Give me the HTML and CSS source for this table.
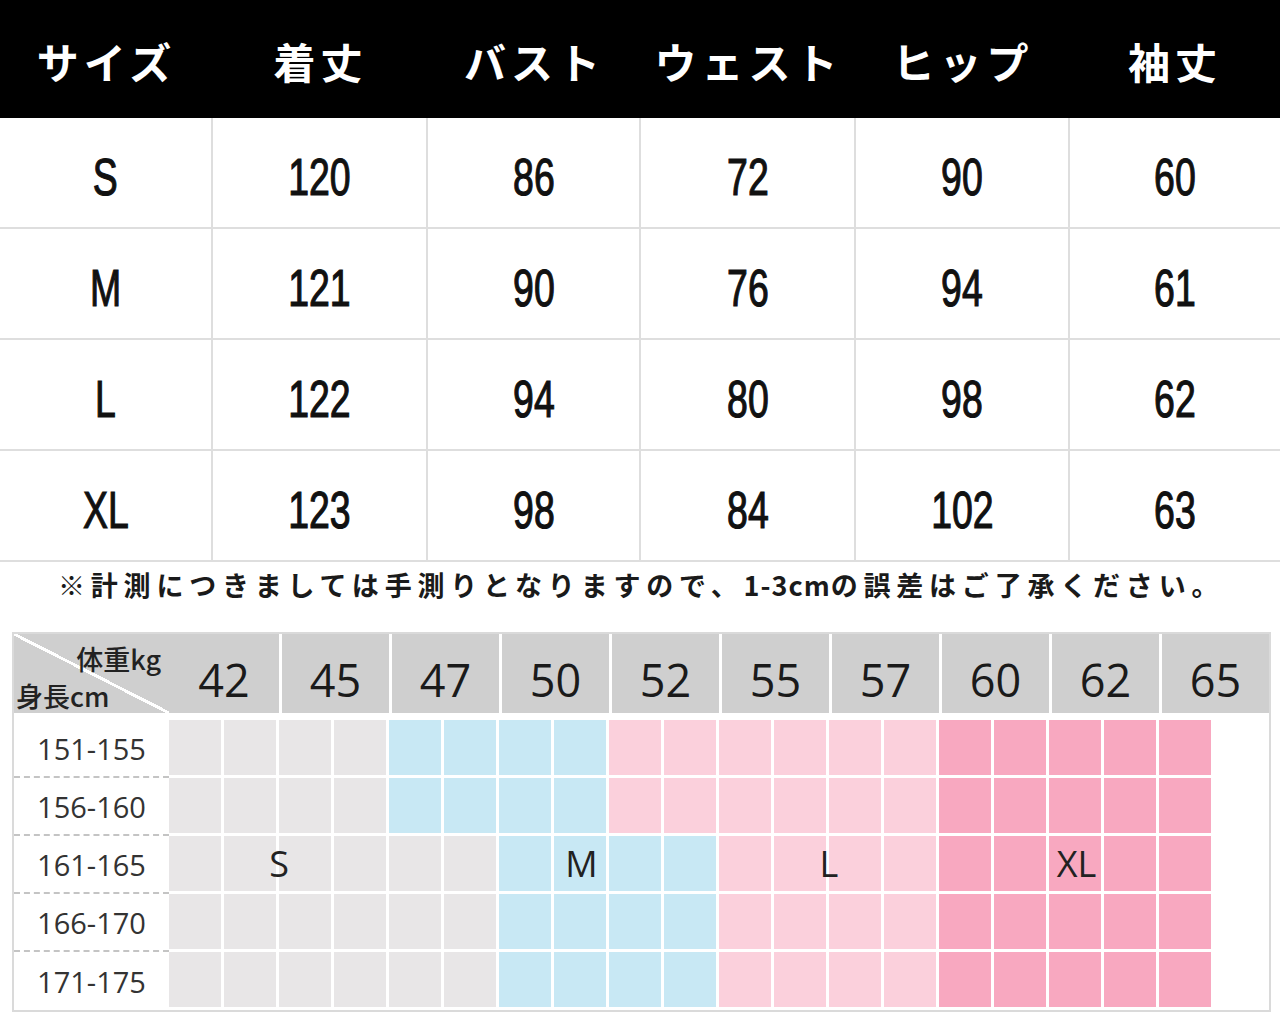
FILE: index.html
```html
<!DOCTYPE html>
<html lang="ja">
  <head>
    <meta charset="UTF-8" />
    <meta name="viewport" content="width=device-width, initial-scale=1.0" />
    <title>サイズ表</title>
    <link rel="stylesheet" href="styles.css">
  </head>
  <body>
    <div class="size-table">
      <div class="head">サイズ</div>
      <div class="head">着丈</div>
      <div class="head">バスト</div>
      <div class="head">ウェスト</div>
      <div class="head">ヒップ</div>
      <div class="head">袖丈</div>

      <div class="cell"><span>S</span></div>
      <div class="cell"><span>120</span></div>
      <div class="cell"><span>86</span></div>
      <div class="cell"><span>72</span></div>
      <div class="cell"><span>90</span></div>
      <div class="cell"><span>60</span></div>

      <div class="cell"><span>M</span></div>
      <div class="cell"><span>121</span></div>
      <div class="cell"><span>90</span></div>
      <div class="cell"><span>76</span></div>
      <div class="cell"><span>94</span></div>
      <div class="cell"><span>61</span></div>

      <div class="cell"><span>L</span></div>
      <div class="cell"><span>122</span></div>
      <div class="cell"><span>94</span></div>
      <div class="cell"><span>80</span></div>
      <div class="cell"><span>98</span></div>
      <div class="cell"><span>62</span></div>

      <div class="cell"><span>XL</span></div>
      <div class="cell"><span>123</span></div>
      <div class="cell"><span>98</span></div>
      <div class="cell"><span>84</span></div>
      <div class="cell"><span>102</span></div>
      <div class="cell"><span>63</span></div>
    </div>

    <p class="note">※計測につきましては手測りとなりますので、<span class="narrow">1-3cm</span>の誤差はご了承ください。</p>

    <div class="chart">
      <div class="chart-head">
        <div class="corner">
          <span class="kg">体重kg</span>
          <span class="cm">身長cm</span>
        </div>
        <div class="w">42</div>
        <div class="w">45</div>
        <div class="w">47</div>
        <div class="w">50</div>
        <div class="w">52</div>
        <div class="w">55</div>
        <div class="w">57</div>
        <div class="w">60</div>
        <div class="w">62</div>
        <div class="w">65</div>
      </div>

      <div class="chart-body">
        <div class="row">
          <div class="range">151-155</div>
          <div class="block gray span-4"></div>
          <div class="block blue span-4"></div>
          <div class="block pink span-6"></div>
          <div class="block rose span-5"></div>
        </div>
        <div class="row">
          <div class="range">156-160</div>
          <div class="block gray span-4"></div>
          <div class="block blue span-4"></div>
          <div class="block pink span-6"></div>
          <div class="block rose span-5"></div>
        </div>
        <div class="row">
          <div class="range">161-165</div>
          <div class="block gray span-6"><span class="tag tag-s">S</span></div>
          <div class="block blue span-4"><span class="tag tag-m">M</span></div>
          <div class="block pink span-4"><span class="tag tag-l">L</span></div>
          <div class="block rose span-5"><span class="tag tag-xl">XL</span></div>
        </div>
        <div class="row">
          <div class="range">166-170</div>
          <div class="block gray span-6"></div>
          <div class="block blue span-4"></div>
          <div class="block pink span-4"></div>
          <div class="block rose span-5"></div>
        </div>
        <div class="row">
          <div class="range">171-175</div>
          <div class="block gray span-6"></div>
          <div class="block blue span-4"></div>
          <div class="block pink span-4"></div>
          <div class="block rose span-5"></div>
        </div>
      </div>
    </div>
  </body>
</html>
```

FILE: styles.css
```css
body {
  margin: 0;
  background: #fff;
  color: #111;
  font-family: "Noto Sans CJK JP", sans-serif;
}

/* top measurement table */
.size-table {
  display: grid;
  grid-template-columns: 213px 215px 213px 215px 214px 1fr;
}

.size-table .head {
  height: 118px;
  box-sizing: border-box;
  padding-top: 2px;
  background: #000;
  color: #fff;
  font-size: 42px;
  font-weight: bold;
  letter-spacing: 5px;
  display: flex;
  align-items: center;
  justify-content: center;
}

.size-table .cell {
  height: 111px;
  box-sizing: border-box;
  padding-top: 8px;
  border-right: 2px solid #dedede;
  border-bottom: 2px solid #dedede;
  font-family: "Liberation Sans", sans-serif;
  font-size: 52px;
  color: #111;
  -webkit-text-stroke: 1.2px #111;
  display: flex;
  align-items: center;
  justify-content: center;
}

.size-table .cell:nth-child(6n) {
  border-right: none;
}

.size-table .cell span {
  display: inline-block;
  transform: scaleX(0.72);
}

.note {
  margin: 0;
  height: 70px;
  box-sizing: border-box;
  padding: 8px 0 0 58px;
  font-size: 27px;
  font-weight: bold;
  line-height: 30px;
  letter-spacing: 5.8px;
  color: #1a1a1a;
  white-space: nowrap;
}

.note .narrow {
  letter-spacing: 1px;
}

/* weight / height chart */
.chart {
  margin-left: 12px;
  width: 1259px;
  box-sizing: border-box;
  border: 2px solid #dadada;
}

.chart-head {
  display: flex;
  height: 79px;
  background: #cfcfcf;
}

.corner {
  width: 155px;
  box-sizing: border-box;
  padding: 8px 8px 0 2px;
  display: flex;
  flex-direction: column;
  justify-content: space-between;
  font-size: 27px;
  font-weight: 500;
  line-height: 34px;
  color: #222;
  background: linear-gradient(
    to top right,
    transparent calc(50% - 1.5px),
    #fff calc(50% - 1.5px),
    #fff calc(50% + 1.5px),
    transparent calc(50% + 1.5px)
  );
}

.corner .kg {
  align-self: flex-end;
}

.w {
  width: 110px;
  box-sizing: border-box;
  padding-top: 12px;
  font-family: "Open Sans", sans-serif;
  font-size: 45px;
  color: #1a1a1a;
  display: flex;
  align-items: center;
  justify-content: center;
}

.w + .w {
  border-left: 3px solid #fff;
}

.chart-body {
  margin-top: 7px;
}

.row {
  display: flex;
  height: 58px;
}

.range {
  width: 155px;
  box-sizing: border-box;
  border-bottom: 2px dashed #c4c4c4;
  font-family: "Open Sans", sans-serif;
  font-size: 29px;
  color: #333;
  display: flex;
  align-items: center;
  justify-content: center;
}

.row:last-child .range {
  border-bottom: none;
}

.block {
  height: 58px;
  box-sizing: border-box;
  border-bottom: 3px solid #fff;
  display: grid;
  grid-template-columns: repeat(auto-fill, 55px);
  align-items: center;
  background: repeating-linear-gradient(
    90deg,
    var(--c) 0 52px,
    #fff 52px 55px
  );
}

.span-4 {
  width: 220px;
}

.span-5 {
  width: 275px;
}

.span-6 {
  width: 330px;
}

.gray {
  --c: #e8e6e7;
}

.blue {
  --c: #c8e8f4;
}

.pink {
  --c: #fbd0dc;
}

.rose {
  --c: #f8a8c0;
}

.tag {
  grid-row: 1;
  text-align: center;
  font-family: "Open Sans", sans-serif;
  font-size: 36px;
  color: #222;
}

.tag-s,
.tag-l {
  grid-column: 1 / span 4;
}

.tag-m {
  grid-column: 2;
}

.tag-xl {
  grid-column: 1 / span 5;
}
```
